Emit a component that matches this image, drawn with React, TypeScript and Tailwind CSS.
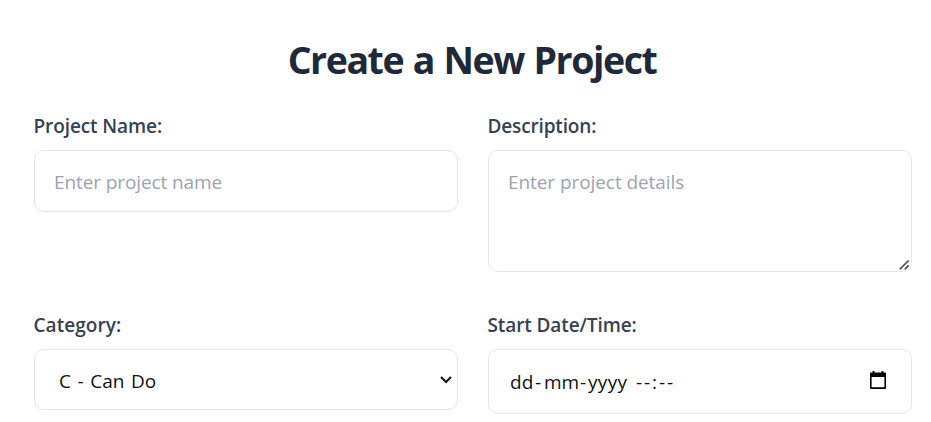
import type { ReactNode } from 'react';

const control =
  'block w-full rounded-[10px] border border-[#e5e7eb] bg-white outline-none placeholder:text-[#9ca3af] placeholder:opacity-100';

function Field({ label, tracking, children }: { label: string; tracking: string; children: ReactNode }) {
  return (
    <div className="min-w-0">
      <label className="mb-2 -ml-[0.5px] block h-8 pt-px text-[19px] leading-[30px] font-semibold text-[#374151]">
        <span className={tracking}>{label}</span>
      </label>
      {children}
    </div>
  );
}

export default function App() {
  return (
    <main className="h-[422px] overflow-hidden bg-white pr-[19px] pl-[34px] pt-9 font-['Open_Sans','Noto_Sans',sans-serif]">
      <h1 className="-ml-0.5 mb-[27px] h-[47px] text-center text-[37.5px] leading-[47px] font-bold text-[#1f2937]">
        <span className="tracking-[-1.45px] [word-spacing:1.3px]">Create a New Project</span>
      </h1>
      <form className="grid grid-cols-2 items-start gap-x-[30px]">
        <Field label="Project Name:" tracking="tracking-[-0.1px]">
          <input
            className={`${control} h-[62px] px-[19px] pt-0.5 text-[19px] tracking-[-0.1px]`}
            placeholder="Enter project name"
          />
        </Field>
        <Field label="Description:" tracking="tracking-[-0.15px]">
          <div className="relative mb-[37px]">
            <textarea
              className={`${control} h-[122px] resize-none px-[19px] py-4 text-[19px] leading-[30px] tracking-[-0.07px]`}
              placeholder="Enter project details"
            />
            <svg className="absolute right-[2px] bottom-[2px]" width="11" height="10" viewBox="0 0 11 10" fill="none" stroke="#55565a" strokeWidth="1.7">
              <path d="M0.7 9.3 9.7 0.5M5.7 9.3l4-3.9" />
            </svg>
          </div>
        </Field>
        <Field label="Category:" tracking="tracking-[0.05px]">
          <div className="relative">
            <select className={`${control} h-[61px] appearance-none px-6 pt-[3px] text-[19px] tracking-[0.05px] [word-spacing:1.5px] text-[#111]`}>
              <option>C - Can Do</option>
            </select>
            <svg className="pointer-events-none absolute top-[27px] right-[6px]" width="12" height="8" viewBox="0 0 12 8" fill="none" stroke="#111" strokeWidth="2">
              <path d="m1 1 5 5 5-5" />
            </svg>
          </div>
        </Field>
        <Field label="Start Date/Time:" tracking="tracking-[-0.1px]">
          <div className={`${control} flex h-[65px] items-center justify-between pr-[25px] pl-[21px] text-[19px] text-[#111]`}>
            <div className="flex pt-0.5 whitespace-pre">
              <span className="w-[25px] tracking-[0.2px]">dd</span>
              <span className="w-[9px]">-</span>
              <span className="w-9">mm</span>
              <span className="w-[8px]">-</span>
              <span className="w-[48px] tracking-[0.3px]">yyyy</span>
              <span className="tracking-[1.9px]">--:--</span>
            </div>
            <svg className="mb-[3px]" width="16" height="18" viewBox="0 0 16 18" fill="#000">
              <path fillRule="evenodd" d="M2.5 0h2v1.5h7V0h2v1.5H15a1 1 0 0 1 1 1V17a1 1 0 0 1-1 1H1a1 1 0 0 1-1-1V2.5a1 1 0 0 1 1-1h1.5ZM1.6 6v10.3h12.8V6Z" />
            </svg>
          </div>
        </Field>
      </form>
    </main>
  );
}
